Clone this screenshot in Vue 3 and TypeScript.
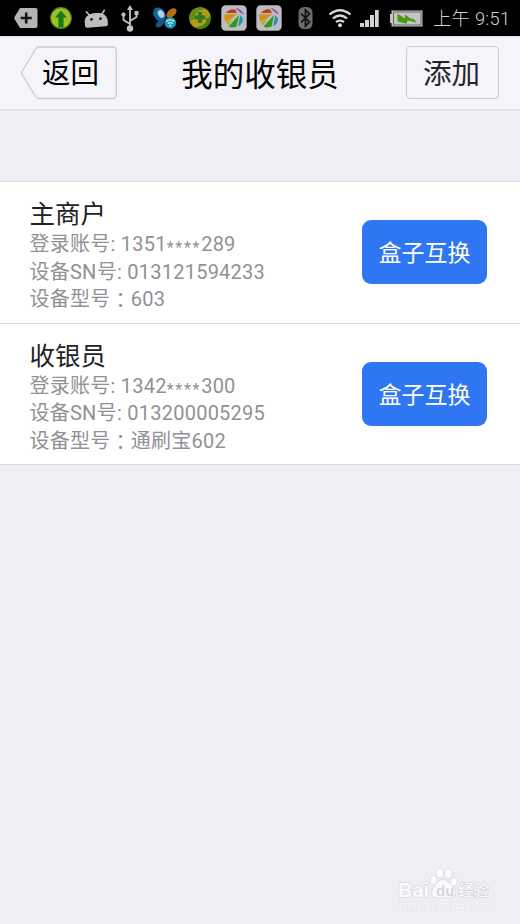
<script setup lang="ts">
interface Account {
  name: string
  phoneStart: string
  phoneEnd: string
  serial: string
  model: string
}

const accounts: Account[] = [
  { name: '主商户', phoneStart: '1351', phoneEnd: '289', serial: '013121594233', model: '603' },
  { name: '收银员', phoneStart: '1342', phoneEnd: '300', serial: '013200005295', model: '通刷宝602' },
]
const galleryIcons = ['first', 'second']
</script>

<template>
  <div class="screen">
    <div class="status">
      <svg class="ic plus" width="24" height="20" viewBox="0 0 24 20">
        <path d="M6 0H21.500Q23.500 0 23.500 2V18Q23.500 20 21.500 20H6L0.500 11Q0 10 0.500 9Z" fill="#b4b4b4" />
        <path d="M12.200 4.500V15.500M6.700 10H17.700" stroke="#151515" stroke-width="2.600" />
      </svg>
      <svg class="ic up" width="22" height="22" viewBox="0 0 22 22">
        <circle cx="11" cy="11" r="10.300" fill="#b7bf20" stroke="#4c8a20" stroke-width="1.200" />
        <circle cx="11" cy="11" r="8.500" fill="#a2bd25" />
        <path d="M11 3.500L17 10.500H13.500V20.500H8.500V10.500H5Z" fill="#197a18" />
      </svg>
      <svg class="ic android" width="24" height="19" viewBox="0 0 24 19">
        <g transform="rotate(-5 12 10)">
          <path d="M0.500 16V12C1 6 6 4 12 4S23 6 23.500 12V16Q23.500 18 21.500 18H2.500Q.5 18 .5 16Z" fill="#bdbdbd" />
          <path d="M6 6L3 2M18 6L21 2" stroke="#bdbdbd" stroke-width="1.600" stroke-linecap="round" />
          <circle cx="7.500" cy="10" r="1.400" fill="#111" /><circle cx="16.500" cy="10" r="1.400" fill="#111" />
        </g>
      </svg>
      <svg class="ic usb" width="18" height="27" viewBox="0 0 18 27">
        <path d="M9 4V24M9 19L2.500 15V10M9 16L15.500 12V8" fill="none" stroke="#c1c1c1" stroke-width="1.800" />
        <path d="M9 0L12 5H6Z" fill="#c1c1c1" /><circle cx="9" cy="23.500" r="3.200" fill="#c1c1c1" />
        <circle cx="2.500" cy="9.500" r="2.100" fill="#c1c1c1" /><path d="M13.500 6H17.500V10H13.500Z" fill="#c1c1c1" />
      </svg>
      <svg class="ic butterfly" width="24" height="22" viewBox="0 0 24 22">
        <ellipse cx="6.500" cy="7.500" rx="5.700" ry="7.500" transform="rotate(-35 6.500 7.500)" fill="#12669f" />
        <ellipse cx="8" cy="7" rx="2.900" ry="4" transform="rotate(-30 8 7)" fill="#bcd0dd" />
        <ellipse cx="18.500" cy="6" rx="3.600" ry="6" transform="rotate(48 18.500 6)" fill="#b66b18" />
        <ellipse cx="7" cy="16.500" rx="5" ry="3" transform="rotate(-40 7 16.500)" fill="#175688" />
        <circle cx="17.300" cy="15.800" r="5.800" fill="#1597b5" />
        <path d="M13.200 14.500Q17.300 11.200 21.400 14.500M14.900 16.600Q17.300 14.800 19.700 16.600" stroke="#d6edf0" stroke-width="1.300" fill="none" />
        <circle cx="17.300" cy="18.600" r="1.100" fill="#d6edf0" />
      </svg>
      <svg class="ic shield" width="22" height="22" viewBox="0 0 22 22">
        <circle cx="11" cy="11" r="10.800" fill="#b39a17" />
        <path d="M.5 13C-1 3 10-2 17 2C9 2 5 7 5 12Q3 14 .5 13Z" fill="#55911b" />
        <path d="M21.500 9C23 18 14 24 6 20C14 20 18 16 17 12Q19 11 21.500 9Z" fill="#3c8217" />
        <path d="M11 5V16M5.500 10.500H16.500" stroke="#37791a" stroke-width="4" />
      </svg>
      <svg v-for="icon in galleryIcons" :key="icon" class="ic gallery" width="26" height="26" viewBox="0 0 26 26">
        <rect x=".3" y=".3" width="25.400" height="25.400" rx="4.500" fill="#bdbdc1" />
        <path d="M5 8Q9 3.500 14 4.500L16 8Z" fill="#ba3c18" />
        <path d="M14.500 3Q19 2.500 23 9.500L19 7.500Z" fill="#a04fac" />
        <path d="M3.500 9.300H16Q11 14 4.500 17Q2.500 13 3.500 9.300Z" fill="#cf9314" />
        <path d="M5 17.500L11 14.500L7 20.500Q5.500 19 5 17.500Z" fill="#b7ae19" />
        <path d="M18 10L15.500 21.500Q11 23.500 7.500 21.500Z" fill="#369719" />
        <path d="M19.300 10L22 13.500Q22 19 17 21.500Z" fill="#2695b5" />
      </svg>
      <svg class="ic bluetooth" width="15" height="22" viewBox="0 0 15 22">
        <rect x=".5" y="0" width="14" height="22" rx="5.500" fill="#6b6b6b" />
        <path d="M3 6.500L11.500 15L7.500 19V3L11.500 7L3 15.500" fill="none" stroke="#101010" stroke-width="1.700" />
      </svg>
      <svg class="ic wifi" width="24" height="19" viewBox="0 0 24 19">
        <path d="M1.500 5.500Q12-3 22.500 5.500M4.800 9.500Q12 3.500 19.200 9.500M8 13.200Q12 10 16 13.200" stroke="#d9d9d9" stroke-width="2.200" fill="none" />
        <circle cx="12" cy="16.200" r="2" fill="#d9d9d9" />
      </svg>
      <svg class="ic signal" width="19" height="17" viewBox="0 0 19 17">
        <path d="M0 13H4V17H0ZM5 10H9V17H5ZM10 5H14V17H10ZM15 0H18.700V17H15Z" fill="#d4d4d4" />
      </svg>
      <svg class="ic battery" width="33" height="17" viewBox="0 0 33 17">
        <path d="M0 4H3V13H0Z" fill="#c3c3c3" />
        <path d="M1.500 .5H32.500V16.500H1.500Z" fill="#c5c5c5" /><path d="M3.500 2H31V15H3.500Z" fill="#c5c5c5" stroke="#686868" />
        <path d="M7.500 3.500L15 8.500V4.500L22 9.500L22.500 8L27 12.800L17.500 10.500L16.500 13.800L7.500 11.500Z" fill="#4b9a0b" />
      </svg>
      <span class="time">上午 9:51</span>
    </div>
    <header class="header">
      <button class="back">
        <svg class="outline" width="96" height="54" viewBox="0 0 96 54">
          <path d="M18 1H91Q95.300 1 95.300 4.500V49Q95.300 52.500 91 52.500H18Q15.500 52.500 14.500 50.500L1 28.500Q0 27 1 25.500L14.500 3Q15.500 1 18 1Z" fill="none" stroke="#cbcacf" stroke-width="1.300" />
        </svg>
        <span>返回</span>
      </button>
      <h1>我的收银员</h1>
      <button class="add">添加</button>
    </header>
    <main class="list">
      <section v-for="account in accounts" :key="account.name" class="row">
        <div class="info">
          <h2>{{ account.name }}</h2>
          <p>登录账号: {{ account.phoneStart }}<span class="mask">****</span>{{ account.phoneEnd }}</p>
          <p>设备SN号: {{ account.serial }}</p>
          <p>设备型号<span class="colon" lang="zh-TW">：</span>{{ account.model }}</p>
        </div>
        <button class="swap">盒子互换</button>
      </section>
    </main>
    <svg class="watermark" width="96" height="48" viewBox="0 0 96 48">
      <g fill="#fbfbfd" stroke="#d9d9df" stroke-width="1.600" paint-order="stroke" stroke-linejoin="round">
        <ellipse cx="35.500" cy="16" rx="3.200" ry="4.300" /><ellipse cx="42" cy="9" rx="3.400" ry="4.600" />
        <ellipse cx="50.500" cy="9.500" rx="3.400" ry="4.600" /><ellipse cx="55.500" cy="18" rx="3.100" ry="4.100" />
        <path d="M39 19Q45 12 51 19L57 26Q59 33 53 33.500H38Q32 32 35 25Z" />
        <text x="0" y="33" class="bai" textLength="31" lengthAdjust="spacingAndGlyphs">Bai</text>
        <text x="60" y="32" class="exp" textLength="31">经验</text>
        <text x="1" y="45" class="url" textLength="90" lengthAdjust="spacingAndGlyphs">jingyan.baidu.com</text>
      </g>
      <text x="38" y="32" class="du" fill="#d6d6dc">du</text>
    </svg>
  </div>
</template>

<style>
body { background: #efeef4; }
</style>
<style scoped>
.screen {
  width: 520px; height: 924px; position: relative; overflow: hidden;
  background: #efeef4; font-family: Roboto, "Noto Sans CJK SC", sans-serif;
}
.status { height: 36px; background: #000; display: flex; align-items: center; padding-left: 14px; }
.ic { flex: none; display: block; }
.up { margin-left: 12px; }
.android { margin-left: 12px; }
.usb { margin-left: 13px; }
.butterfly { margin-left: 14px; }
.shield { margin-left: 12px; }
.gallery { margin-left: 9px; }
.shield + .gallery { margin-left: 10px; }
.bluetooth { margin-left: 16px; }
.wifi { margin-left: 15px; }
.signal { margin-left: 8px; }
.battery { margin-left: 11px; }
.time { margin-left: 10px; color: #d0d0d0; font-size: 18.300px; letter-spacing: .3px; line-height: 34px; padding-top: 2px; white-space: nowrap; font-weight: 300; }
.header {
  height: 75px; box-sizing: border-box; background: #f5f4fa;
  border-top: 1px solid #dddce1; border-bottom: 2px solid #e4e3e8;
  display: grid; grid-template-columns: 96px 1fr 93px; align-items: center; padding: 0 21px 1px;
}
button { appearance: none; border: 0; background: none; padding: 0; margin: 0; font-family: inherit; }
.back { position: relative; height: 54px; font-size: 28.500px; line-height: 56px; color: #000; text-align: left; padding-left: 21px; }
.outline { position: absolute; left: 0; top: 0; }
h1 { margin: 0; text-align: center; font-size: 31.500px; line-height: 46px; font-weight: 400; color: #000; padding: 6px 3px 0 0; }
.add { height: 53px; border: 1px solid #cbcacf; border-radius: 4px; font-size: 28.500px; line-height: 51px; padding: 2px 2px 0 0; color: #252529; }
.list { margin-top: 70px; border-top: 1px solid #d9d9dc; background: #fff; }
.row {
  height: 141.500px; box-sizing: border-box; border-bottom: 1px solid #dddddf;
  display: flex; justify-content: space-between; align-items: center; padding: 0 33px 0 29.500px;
}
.info { padding-top: 7px; }
h2 { margin: 0; font-size: 25.500px; line-height: 32.500px; font-weight: 400; color: #222226; }
p { margin: 0; font-size: 20px; line-height: 27.500px; color: #919195; white-space: nowrap; letter-spacing: .25px; }
h2 + p { margin-top: .5px; }
.mask { font-size: 16px; line-height: 1; letter-spacing: 1.700px; position: relative; top: 2px; }
.colon { font-family: "Noto Sans CJK TC", sans-serif; line-height: 1; position: relative; top: 2px; }
.swap { width: 125px; height: 64px; border-radius: 9px; background: #2e76f2; color: #fff; font-size: 23px; line-height: 60px; padding-top: 4px; }
.watermark { position: absolute; left: 398px; top: 864px; font-family: "Liberation Sans", "Noto Sans CJK SC", sans-serif; }
.bai { font-size: 21px; font-weight: 700; }
.exp { font-size: 16px; font-weight: 400; }
.url { font-size: 11px; stroke-width: 1px; stroke: #e3e3e8; }
.du { font-size: 15px; font-weight: 700; }
</style>
